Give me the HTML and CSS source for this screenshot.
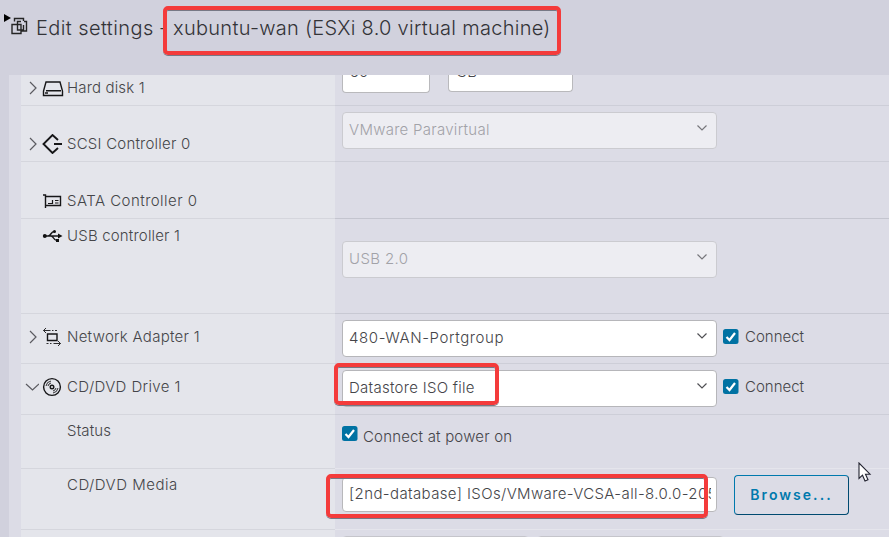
FILE: index.html
```html
<!DOCTYPE html>
<html lang="en">
<head>
<meta charset="utf-8">
<title>Edit settings</title>
<link rel="stylesheet" href="styles.css">
</head>
<body>
<header class="header">
  <svg class="vm-icon" width="26" height="24" viewBox="0 0 26 24" fill="none" stroke="#252525" stroke-width="1.4"><path d="M1 1l7 4-7 4z" fill="#000" stroke="none"/><path d="M11.500 8.500V5.500h9V8M9 11.500h9V20.500H9z"/><path d="M21 8.500h2.500v9.500H18M14.500 11v-2.500H18M14.500 11.500v5.500h6V12"/></svg>
  <h1 class="title"><span class="title-main">Edit settings</span><span class="title-dash">-</span><span class="title-name">xubuntu-wan (ESXi 8.0 virtual machine)</span></h1>
</header>
<main class="settings">
  <section class="row disk">
    <div class="label"><svg class="caret" viewBox="0 0 14 16"><path d="M5 2l6 6-6 6"/></svg><svg class="icon" viewBox="0 0 22 20"><path d="M4 4h14l2.500 9v4.500H1.500v-4.500zM4 12.800h15M3 15h3"/></svg><span class="t-disk">Hard disk 1</span></div>
    <div class="value"><div class="number"><span>50</span></div><div class="unit"><span>GB</span></div></div>
  </section>
  <section class="row scsi">
    <div class="label"><svg class="caret" viewBox="0 0 14 16"><path d="M5 2l6 6-6 6"/></svg><svg class="icon heavy" viewBox="0 0 22 20"><path d="M16 6l-5.500-5-9 9 9 9 5.500-5M12 10h8"/></svg><span class="t-scsi">SCSI Controller 0</span></div>
    <div class="value"><div class="select disabled"><span class="t-para">VMware Paravirtual</span><svg class="down" viewBox="0 0 12 8"><path d="M1.500 1.500L6 6l4.500-4.500"/></svg></div></div>
  </section>
  <section class="row sata">
    <div class="label"><i class="caret"></i><svg class="icon" viewBox="0 0 22 20"><path d="M1 4h2.500v13M3.500 5.500h15v9h-15"/><path class="fine" d="M6 12.500h4.500V9M13 9.500h3.500M13 12h3.500"/></svg><span class="t-sata">SATA Controller 0</span></div>
    <div class="value"></div>
  </section>
  <section class="row usb">
    <div class="label"><i class="caret"></i><svg class="icon" viewBox="0 0 22 20"><path d="M3 10h14M6 10c3 0 3-4.500 6-4.500M9 10c3 0 2 4.500 6 4.500"/><path class="solid" d="M16 7.500l4.500 2.500-4.500 2.500zM14 13h3v3h-3z"/><circle class="solid" cx="2.800" cy="10" r="2"/><circle class="solid" cx="12.500" cy="5.500" r="1.500"/></svg><span class="t-usb">USB controller 1</span></div>
    <div class="value"><div class="select disabled"><span class="t-usb2">USB 2.0</span><svg class="down" viewBox="0 0 12 8"><path d="M1.500 1.500L6 6l4.500-4.500"/></svg></div></div>
  </section>
  <section class="row network">
    <div class="label"><svg class="caret" viewBox="0 0 14 16"><path d="M5 2l6 6-6 6"/></svg><svg class="icon" viewBox="0 0 22 20"><path d="M5.500 7h9.500v6.500H5.500z"/><path class="thin" d="M1.500 3.500h7M10 3.500h1.500M13 3.500h2M4 1L1.500 3.500 4 6M18.500 16.500h-7M9.500 16.500H8M6.500 16.500H4.500M16 14l2.500 2.500L16 19"/></svg><span class="t-net">Network Adapter 1</span></div>
    <div class="value"><div class="select"><span class="t-port">480-WAN-Portgroup</span><svg class="down" viewBox="0 0 12 8"><path d="M1.500 1.500L6 6l4.500-4.500"/></svg></div><svg class="check" viewBox="0 0 16 16"><rect width="15.500" height="15" rx="2.500"/><path d="M3.500 8l3 3L12 4"/></svg><span class="t-conn">Connect</span></div>
  </section>
  <section class="row drive">
    <div class="label"><svg class="caret" viewBox="0 0 14 16"><path d="M1 5l6.500 6L14 5"/></svg><svg class="icon" viewBox="0 0 22 20"><circle cx="10" cy="10" r="8.400"/><circle cx="10" cy="10" r="1.800"/><path class="thin" d="M4 9a6 6 0 0 1 5-5M6 9a4 4 0 0 1 3-3M16 11a6 6 0 0 1-5 5M14 11a4 4 0 0 1-3 3"/></svg><span class="t-drive">CD/DVD Drive 1</span></div>
    <div class="value"><div class="select"><span class="t-iso">Datastore ISO file</span><svg class="down" viewBox="0 0 12 8"><path d="M1.500 1.500L6 6l4.500-4.500"/></svg></div><svg class="check" viewBox="0 0 16 16"><rect width="15.500" height="15" rx="2.500"/><path d="M3.500 8l3 3L12 4"/></svg><span class="t-conn">Connect</span></div>
  </section>
  <section class="row status">
    <div class="label sub"><span class="t-status">Status</span></div>
    <div class="value"><svg class="check" viewBox="0 0 16 16"><rect width="15.500" height="15" rx="2.500"/><path d="M3.500 8l3 3L12 4"/></svg><span class="t-power">Connect at power on</span></div>
  </section>
  <section class="row media">
    <div class="label sub"><span class="t-media">CD/DVD Media</span></div>
    <div class="value"><div class="file"><span class="t-file">[2nd-database] ISOs/VMware-VCSA-all-8.0.0-205</span></div><button class="browse">Browse...</button></div>
  </section>
  <section class="row last">
    <div class="label"></div>
    <div class="value"><div class="stub"></div><div class="stub"></div></div>
  </section>
</main>
<div class="mark mark-name"></div>
<div class="mark mark-iso"></div>
<div class="mark mark-file"></div>
<svg class="cursor" viewBox="0 0 14 20"><path d="M1 1v15.500l3.500-3.300L7 19l3-1.300-2.500-5.500H12z"/></svg>
</body>
</html>
```
FILE: styles.css
```css
* { box-sizing: border-box; }
body {
  margin: 0;
  width: 889px;
  height: 537px;
  overflow: hidden;
  background: #d1d1dd;
  color: #454549;
  font: 300 15px/20px Inter, "Open Sans", sans-serif;
}
span { white-space: nowrap; }
.header { display: flex; height: 75px; padding: 13px 0 0 3px; }
.vm-icon { flex: none; }
.title { display: flex; margin: 0 0 0 7px; font-size: 20px; line-height: 30px; font-weight: 300; color: #333337; }
.title-main { width: 123px; letter-spacing: .4px; }
.title-dash { width: 14px; }
.title-name { letter-spacing: .28px; }
.settings { margin-left: 9px; padding-left: 12px; height: 462px; overflow: hidden; background: #dcdce6; }
.row { display: grid; grid-template-columns: 314px 1fr; }
.label { display: flex; align-items: flex-start; padding-left: 4px; background: #e4e5eb; border-bottom: 1px solid #d5d6dd; }
.label.sub { padding-left: 46px; }
.value { display: flex; align-items: flex-start; padding-left: 7px; min-width: 0; border-bottom: 1px solid #cdced8; }
.caret { flex: none; width: 14px; height: 16px; margin: 2px 3px 0 0; fill: none; stroke: #5b5b61; stroke-width: 1.2; }
.icon { flex: none; width: 22px; height: 20px; margin-right: 3px; fill: none; stroke: #161618; stroke-width: 1.4; }
.icon.heavy { stroke-width: 1.9; }
.icon .solid { fill: #111; stroke: none; }
.icon .thin { stroke-width: .9; }
.icon .fine { stroke-width: 1.2; }
.t-disk { letter-spacing: .15px; }
.t-scsi { letter-spacing: .22px; }
.t-sata { letter-spacing: .46px; }
.t-usb { letter-spacing: .18px; }
.t-net { letter-spacing: .27px; }
.t-drive { letter-spacing: .38px; }
.t-media { letter-spacing: .5px; }
.t-status { letter-spacing: .15px; }
.t-para { letter-spacing: .28px; }
.t-usb2 { letter-spacing: .35px; }
.t-port { letter-spacing: .6px; }
.t-iso { letter-spacing: .28px; }
.t-power { letter-spacing: .18px; }
.t-file { letter-spacing: .38px; }
.disk { height: 31px; }
.disk .label { padding-top: 3px; }
.scsi { height: 56px; }
.scsi .label { padding-top: 28px; }
.scsi .value { padding-top: 6px; }
.sata { height: 57px; }
.sata .label { padding-top: 29px; }
.sata .value { border-color: #c4c5cf; }
.usb { height: 95px; }
.usb .label { padding-top: 7px; }
.usb .value { padding-top: 22px; border-color: #c8c9d3; }
.network { height: 50px; }
.network .label { padding-top: 13px; }
.network .value { padding-top: 6px; }
.drive { height: 51px; }
.drive .label { padding-top: 13px; }
.drive .value { padding-top: 6px; }
.status { height: 54px; }
.status .label { padding-top: 6px; }
.status .value { padding-top: 11px; border-color: #e5e5ec; }
.media { height: 61px; }
.media .label { padding-top: 6px; }
.media .value { padding-top: 6px; border-color: #e5e5ec; }
.last { height: 40px; }
.number, .unit { overflow: hidden; padding-left: 7px; background: #fff; border: 1px solid #b9b9bc; border-top: 0; border-radius: 0 0 4px 4px; }
.number { width: 88px; height: 18px; margin-right: 18px; }
.unit { width: 125px; height: 17px; }
.number span, .unit span { display: block; margin-top: -13px; }
.select { display: flex; justify-content: space-between; width: 375px; height: 37px; padding: 7px 8px 0 7px; background: #fff; border: 1px solid #b6b6ba; border-radius: 4px; flex: none; }
.select span { margin-left: -1px; }
.down { width: 12px; height: 8px; margin-top: 4px; fill: none; stroke: #505054; stroke-width: 1.2; }
.disabled { background: #ededf2; border-color: #cbcbd0; color: #a2a2a8; }
.disabled .down { stroke: #77777c; }
.check { flex: none; width: 16px; height: 16px; margin: 9px 6px 0 6px; fill: #0072a3; }
.check path { fill: none; stroke: #fff; stroke-width: 2.2; }
.check + span { margin-top: 7px; }
.status .check { margin: 0 5px 0 0; }
.status .check + span { margin-top: 1px; }
.file { flex: none; width: 375px; height: 35px; margin-top: 2px; padding: 6px 5px 0 6px; background: #fff; border: 1px solid #b8b8bb; border-radius: 4px; }
.file span { display: block; overflow: hidden; }
.browse { width: 115px; height: 40px; margin-left: 17px; padding: 0; background: transparent; border: 1px solid #0079ad; border-right-color: #004a70; border-bottom-color: #004a70; border-radius: 4px; color: #0079ad; font: 600 14px/20px Inter, sans-serif; letter-spacing: 2.05px; }
.last .value { padding-top: 6px; }
.stub { flex: none; width: 187px; height: 30px; margin-right: 8px; background: #ededf2; border: 1px solid #c5c5cb; border-radius: 4px; }
.mark { position: absolute; border: 4px solid #f43b3b; border-radius: 5px; box-shadow: 0 1px 0 #777885, inset 0 1px 0 #777885; }
.mark-name { left: 163px; top: 6px; width: 398px; height: 49px; }
.mark-iso { left: 334px; top: 363px; width: 165px; height: 42px; }
.mark-file { left: 326px; top: 474px; width: 382px; height: 44px; }
.cursor { position: absolute; left: 858px; top: 462px; width: 14px; height: 20px; fill: #fff; stroke: #222330; stroke-width: 1.1; }
```
